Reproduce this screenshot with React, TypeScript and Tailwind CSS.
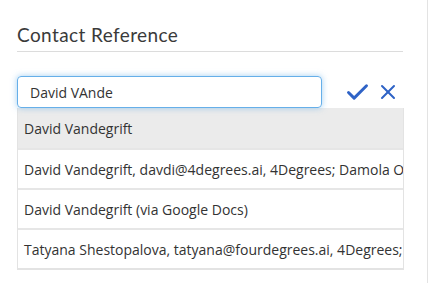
import { Check, X } from "lucide-react";

const results = [
  "David Vandegrift",
  "David Vandegrift, davdi@4degrees.ai, 4Degrees; Damola Ogundipe, damola@4degrees.ai",
  "David Vandegrift (via Google Docs)",
  "Tatyana Shestopalova, tatyana@fourdegrees.ai, 4Degrees; David Vandegrift",
];

const App = () => {
  return (
    <div className="w-[428px] h-[283px] bg-white border-r border-[#e3e3e3] font-['Open_Sans',sans-serif]">
      <div className="pl-[17px] pr-[24px] pt-[23px]">
        <h2 className="font-['Lato',sans-serif] text-[19px] tracking-[0.4px] text-[#3a3a3a] leading-[24px] pb-[4px] border-b border-[#dcdcdc]">
          Contact Reference
        </h2>

        <div className="mt-[24px] flex items-center">
          <input
            defaultValue="David VAnde"
            className="w-[305px] h-[32px] rounded-[4px] border border-[#66afe9] shadow-[0_0_6px_rgba(102,175,233,0.6)] px-[12px] text-[14px] text-[#333] outline-none"
          />
          <div className="flex items-center ml-[22px] gap-[5px] text-[#2f63c6]">
            <Check className="w-[27px] h-[27px]" strokeWidth={2.6} />
            <X className="w-[24px] h-[24px]" strokeWidth={2} />
          </div>
        </div>

        <ul className="w-[387px] border-x border-b-2 border-[#e3e3e3] text-[14px] text-[#333]">
          {results.map((r, i) => (
            <li
              key={r}
              className={
                "h-[40px] flex items-center px-[6px] whitespace-nowrap overflow-hidden " +
                (i === 0 ? "bg-[#ebebeb]" : "bg-white border-t-2 border-[#e6e6e6]")
              }
            >
              {r}
            </li>
          ))}
        </ul>
      </div>
    </div>
  );
};

export default App;
